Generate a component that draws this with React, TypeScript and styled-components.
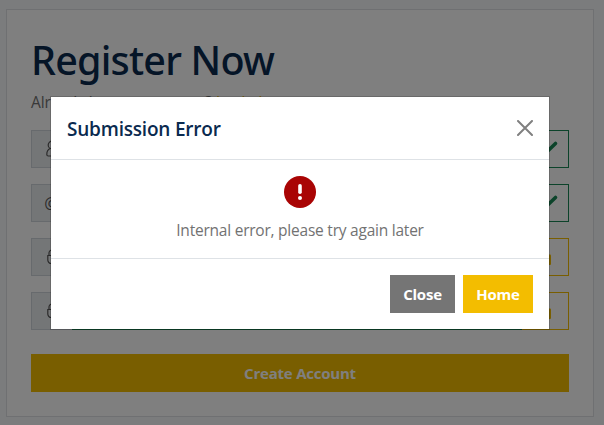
import React from 'react';
import styled, { createGlobalStyle } from 'styled-components';

const GlobalStyle = createGlobalStyle`
  * { box-sizing: border-box; }
  html { overflow: hidden; }
  body {
    margin: 0;
    background: #f7f8fb;
    color: #727272;
    font: 400 16px/24px "Open Sans", "Noto Sans", sans-serif;
  }
`;

const Page = styled.main`
  padding: 9px 10px 8px 6px;
`;

const Card = styled.section`
  border: 1px solid #dfe0e4;
  background: #fff;
  padding: 24px;
`;

const Title = styled.h1`
  margin: 0 0 8px;
  padding-top: 4px;
  color: #0a2a4f;
  font: 500 39.5px/44px "Noto Sans", sans-serif;
  letter-spacing: -0.8px;
`;

const Lead = styled.p`
  margin: 0 0 16px;
  font-size: 15.5px;
  letter-spacing: -0.1px;
`;

const TextLink = styled.a`
  color: #f3bd00;
`;

const FieldGroup = styled.div`
  display: flex;
  height: 38px;
  margin-bottom: 16px;
`;

const Prefix = styled.span`
  display: flex;
  align-items: center;
  justify-content: center;
  width: 41px;
  border: 1px solid #ced4da;
  background: #e9ecef;
  color: #555;
`;

const Input = styled.span<{ $tone: string }>`
  flex: 1;
  border: 1px solid ${(p) => p.$tone};
`;

const Status = styled.span<{ $tone: string }>`
  display: flex;
  align-items: center;
  justify-content: center;
  width: 47px;
  border: 1px solid ${(p) => p.$tone};
  border-left: 0;
  color: ${(p) => p.$tone};
`;

const Button = styled.button<{ $tone?: 'gray'; $block?: boolean }>`
  display: ${(p) => (p.$block ? 'block' : 'inline-block')};
  width: ${(p) => (p.$block ? '100%' : 'auto')};
  height: 38px;
  margin: ${(p) => (p.$block ? '24px 0 0' : '0')};
  padding: 0;
  border: 0;
  background: ${(p) => (p.$tone === 'gray' ? '#757575' : '#f3bd00')};
  color: #fff;
  font: 700 15px/24px "Open Sans", sans-serif;
  letter-spacing: -0.22px;
`;

const Backdrop = styled.div`
  position: fixed;
  inset: 0;
  padding: 96px 54px 0 50px;
  background: rgba(0, 0, 0, 0.5);
`;

const Dialog = styled.div`
  border: 1px solid rgba(0, 0, 0, 0.175);
  background: #fff;
  background-clip: padding-box;
`;

const DialogHeader = styled.header`
  display: flex;
  align-items: center;
  justify-content: space-between;
  height: 63px;
  padding: 0 16px;
  border-bottom: 1px solid #dee2e6;
`;

const DialogTitle = styled.h2`
  margin: 0;
  padding-top: 2px;
  color: #0a2a4f;
  font: 600 19px/30px "Open Sans", sans-serif;
  letter-spacing: -0.2px;
`;

const CloseButton = styled.button`
  display: flex;
  padding: 0;
  border: 0;
  background: none;
  color: #808080;
`;

const DialogBody = styled.div`
  display: flex;
  flex-direction: column;
  align-items: center;
  height: 98px;
  padding-top: 16px;
`;

const Message = styled.p`
  margin: 10px 0 0;
  font-size: 15.5px;
  letter-spacing: -0.23px;
`;

const DialogFooter = styled.footer`
  display: grid;
  grid-template-columns: 65px 70px;
  justify-content: end;
  gap: 8px;
  padding: 16px;
  border-top: 1px solid #dee2e6;
`;

const PersonIcon = () => (
  <svg width="12" height="18" viewBox="0 0 12 18" fill="none" stroke="currentColor" strokeWidth="1.2" aria-hidden="true">
    <circle cx="6" cy="5" r="3.800" />
    <path d="M4 8.500C2 9.500.8 12 .8 14.500q0 1.500 1.500 1.500h7.400q1.500 0 1.500-1.500c0-2.500-1.200-5-3.200-6" />
  </svg>
);

const LockIcon = () => (
  <svg width="10" height="16" viewBox="0 0 10 16" fill="none" stroke="currentColor" strokeWidth="1.2" aria-hidden="true">
    <path d="M2 6V4a3 3 0 0 1 6 0v2M.8 6.500h8.400V11a3.500 3.500 0 0 1-3.500 3.500H4.300A3.500 3.500 0 0 1 .8 11z" />
  </svg>
);

const CheckIcon = () => (
  <svg width="28" height="20" viewBox="0 0 28 20" fill="none" aria-hidden="true">
    <path d="M5 12l6 5.500L24.500 4.500" stroke="currentColor" strokeWidth="3.600" strokeLinecap="round" strokeLinejoin="round" />
  </svg>
);

const PadlockIcon = () => (
  <svg width="12" height="20" viewBox="0 0 12 20" aria-hidden="true">
    <path d="M3 9V6a3 3 0 0 1 6 0v3" fill="none" stroke="currentColor" strokeWidth="2" />
    <rect y="7.500" width="12" height="10.500" rx="1" fill="currentColor" />
  </svg>
);

const fields = [
  { icon: <PersonIcon />, valid: true },
  { icon: '@', valid: true },
  { icon: <LockIcon />, valid: false },
  { icon: <LockIcon />, valid: false },
];

export default function App() {
  return (
    <>
      <GlobalStyle />
      <Page>
        <Card>
          <Title>Register Now</Title>
          <Lead>
            Already have an account? <TextLink>Login here</TextLink>
          </Lead>
          {fields.map(({ icon, valid }, i) => (
            <FieldGroup key={i}>
              <Prefix>{icon}</Prefix>
              <Input $tone="#198754" />
              <Status $tone={valid ? '#198754' : '#f3bd00'}>
                {valid ? <CheckIcon /> : <PadlockIcon />}
              </Status>
            </FieldGroup>
          ))}
          <Button $block>Create Account</Button>
        </Card>
      </Page>
      <Backdrop>
        <Dialog role="dialog" aria-label="Submission Error">
          <DialogHeader>
            <DialogTitle>Submission Error</DialogTitle>
            <CloseButton aria-label="Dismiss">
              <svg width="16" height="16" viewBox="0 0 16 16" aria-hidden="true">
                <path d="M1 1l14 14M15 1L1 15" stroke="currentColor" strokeWidth="2" strokeLinecap="round" />
              </svg>
            </CloseButton>
          </DialogHeader>
          <DialogBody>
            <svg width="32" height="32" viewBox="0 0 32 32" aria-hidden="true">
              <circle cx="16" cy="16" r="16" fill="#a90404" />
              <path d="M16 9.800v6.400" stroke="#fff" strokeWidth="3.600" strokeLinecap="round" />
              <circle cx="16" cy="22" r="2" fill="#fff" />
            </svg>
            <Message>Internal error, please try again later</Message>
          </DialogBody>
          <DialogFooter>
            <Button $tone="gray">Close</Button>
            <Button>Home</Button>
          </DialogFooter>
        </Dialog>
      </Backdrop>
    </>
  );
}
